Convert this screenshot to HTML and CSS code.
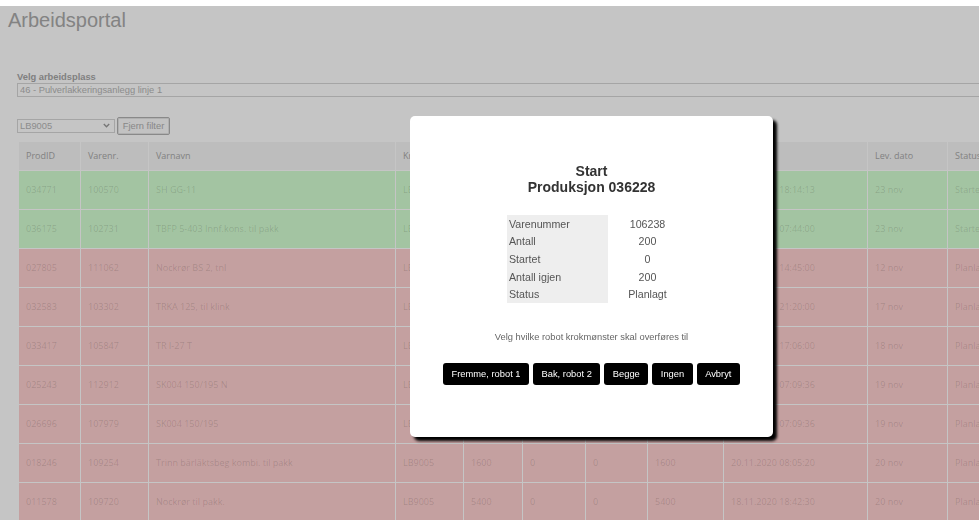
FILE: index.html
```html
<!DOCTYPE html>
<html lang="no">
<head>
<meta charset="utf-8">
<title>Arbeidsportal</title>
<link rel="stylesheet" href="styles.css">
</head>
<body>
  <div class="page">
    <h1 class="title">Arbeidsportal</h1>

    <div class="workspace">
      <label class="field-label" for="workplace">Velg arbeidsplass</label>
      <select id="workplace" class="workplace">
        <option>46 - Pulverlakkeringsanlegg linje 1</option>
      </select>

      <div class="filter">
        <div class="filter-select">
          <select>
            <option>LB9005</option>
          </select>
          <svg class="chevron" width="7" height="5" viewBox="0 0 7 5" aria-hidden="true">
            <path d="M0.8 1 L3.5 3.7 L6.2 1" fill="none" stroke="currentColor" stroke-width="1.4"/>
          </svg>
        </div>
        <button class="filter-clear" type="button">Fjern filter</button>
      </div>

      <table class="orders">
        <colgroup>
          <col style="width:62px"><col style="width:68px"><col style="width:247px"><col style="width:68px">
          <col style="width:59px"><col style="width:63px"><col style="width:62px"><col style="width:76px">
          <col style="width:144px"><col style="width:80px"><col style="width:110px">
        </colgroup>
        <thead>
          <tr>
            <th>ProdID</th><th>Varenr.</th><th>Varnavn</th><th>Krok</th><th>Antall</th><th>Startet</th>
            <th>Ferdig</th><th>Igjen</th><th>Start</th><th>Lev. dato</th><th>Status</th>
          </tr>
        </thead>
        <tbody>
          <tr class="started">
            <td>034771</td><td>100570</td><td>SH GG-11</td><td>LB9005</td><td>1200</td><td>400</td>
            <td>380</td><td>800</td><td>20.11.2020 18:14:13</td><td>23 nov</td><td>Startet</td>
          </tr>
          <tr class="started">
            <td>036175</td><td>102731</td><td>TBFP 5-403 Innf.kons. til pakk</td><td>LB9005</td><td>2400</td><td>1200</td>
            <td>1150</td><td>1200</td><td>21.11.2020 07:44:00</td><td>23 nov</td><td>Startet</td>
          </tr>
          <tr class="planned">
            <td>027805</td><td>111062</td><td>Nockrør BS 2, tnl</td><td>LB9005</td><td>800</td><td>0</td>
            <td>0</td><td>800</td><td>10.11.2020 14:45:00</td><td>12 nov</td><td>Planlagt</td>
          </tr>
          <tr class="planned">
            <td>032583</td><td>103302</td><td>TRKA 125, til klink</td><td>LB9005</td><td>600</td><td>0</td>
            <td>0</td><td>600</td><td>15.11.2020 21:20:00</td><td>17 nov</td><td>Planlagt</td>
          </tr>
          <tr class="planned">
            <td>033417</td><td>105847</td><td>TR I-27 T</td><td>LB9005</td><td>1000</td><td>0</td>
            <td>0</td><td>1000</td><td>16.11.2020 17:06:00</td><td>18 nov</td><td>Planlagt</td>
          </tr>
          <tr class="planned">
            <td>025243</td><td>112912</td><td>SK004 150/195 N</td><td>LB9005</td><td>300</td><td>0</td>
            <td>0</td><td>300</td><td>17.11.2020 07:09:36</td><td>19 nov</td><td>Planlagt</td>
          </tr>
          <tr class="planned">
            <td>026696</td><td>107979</td><td>SK004 150/195</td><td>LB9005</td><td>300</td><td>0</td>
            <td>0</td><td>300</td><td>17.11.2020 07:09:36</td><td>19 nov</td><td>Planlagt</td>
          </tr>
          <tr class="planned">
            <td>018246</td><td>109254</td><td>Trinn bärläktsbeg kombi. til pakk</td><td>LB9005</td><td>1600</td><td>0</td>
            <td>0</td><td>1600</td><td>20.11.2020 08:05:20</td><td>20 nov</td><td>Planlagt</td>
          </tr>
          <tr class="planned">
            <td>011578</td><td>109720</td><td>Nockrør til pakk.</td><td>LB9005</td><td>5400</td><td>0</td>
            <td>0</td><td>5400</td><td>18.11.2020 18:42:30</td><td>20 nov</td><td>Planlagt</td>
          </tr>
        </tbody>
      </table>
    </div>
  </div>

  <div class="backdrop"></div>

  <div class="modal" role="dialog" aria-modal="true">
    <h2 class="modal-title">Start<br>Produksjon 036228</h2>
    <table class="details">
      <tr><th>Varenummer</th><td>106238</td></tr>
      <tr><th>Antall</th><td>200</td></tr>
      <tr><th>Startet</th><td>0</td></tr>
      <tr><th>Antall igjen</th><td>200</td></tr>
      <tr><th>Status</th><td>Planlagt</td></tr>
    </table>
    <p class="prompt">Velg hvilke robot krokmønster skal overføres til</p>
    <div class="actions">
      <button type="button">Fremme, robot 1</button>
      <button type="button">Bak, robot 2</button>
      <button type="button">Begge</button>
      <button type="button">Ingen</button>
      <button type="button">Avbryt</button>
    </div>
  </div>
</body>
</html>
```

FILE: styles.css
```css
html,
body {
  margin: 0;
  height: 100%;
  overflow: hidden;
}

body {
  background: #fff;
  font-family: "Liberation Sans", Arial, sans-serif;
}

.page {
  padding: 9px 8px 8px;
  width: 1060px;
}

.title {
  margin: 0;
  font-size: 20px;
  line-height: 23px;
  font-weight: normal;
  color: #aaa;
}

.workspace {
  margin-top: 40px;
  padding-left: 9px;
}

.field-label {
  display: block;
  font-size: 9.33px;
  line-height: 11px;
  font-weight: bold;
  color: #a6a6a6;
}

.workplace,
.filter-select select {
  appearance: none;
  -webkit-appearance: none;
  display: block;
  box-sizing: border-box;
  height: 14px;
  margin: 0;
  padding: 0 2px;
  border: 1px solid #d6d6d6;
  border-radius: 0;
  background: #fff;
  font-family: "Liberation Sans", Arial, sans-serif;
  font-size: 9.33px;
  line-height: 12px;
  color: #b6b6b6;
}

.workplace {
  width: 100%;
}

.filter {
  display: flex;
  align-items: center;
  gap: 2px;
  margin-top: 20px;
}

.filter-select {
  position: relative;
  width: 98px;
}

.filter-select select {
  width: 100%;
}

.chevron {
  position: absolute;
  right: 5px;
  top: 4px;
  color: #9a9a9a;
}

.filter-clear {
  box-sizing: border-box;
  width: 53px;
  height: 18px;
  padding: 0;
  border: 1px solid #b2b2b2;
  border-radius: 2px;
  box-shadow: inset 0 0 0 1px #e4e4e4;
  background: #fbfbfb;
  font-family: "Liberation Sans", Arial, sans-serif;
  font-size: 9.33px;
  color: #b0b0b0;
}

/* order list */
.orders {
  margin: 7px 0 0 1px;
  border-collapse: collapse;
  table-layout: fixed;
  width: 1039px;
  font-family: "Open Sans", sans-serif;
  font-size: 9px;
}

.orders th,
.orders td {
  padding: 0 7px;
  text-align: left;
  white-space: nowrap;
  overflow: hidden;
}

.orders thead tr {
  height: 28px;
}

.orders th {
  background: #f5f5f5;
  border-left: 1px solid #fff;
  font-weight: normal;
  color: #a8a8a8;
}

.orders tbody tr {
  height: 39px;
}

.orders td {
  border: 1px solid rgba(255, 255, 255, 0.2);
  color: rgba(0, 0, 0, 0.15);
}

.orders .started {
  background: #d4fed2;
}

.orders .planned {
  background: #fecfcf;
}

/* dialog */
.backdrop {
  position: fixed;
  top: 6px;
  left: 0;
  right: 0;
  bottom: 0;
  background: rgba(0, 0, 0, 0.227);
}

.modal {
  position: fixed;
  left: 410px;
  top: 116px;
  box-sizing: border-box;
  width: 363px;
  height: 321px;
  padding-top: 47px;
  background: #fff;
  border-radius: 5px;
  box-shadow: 4px 4px 3px #000;
  text-align: center;
}

.modal-title {
  margin: 0;
  font-size: 14px;
  line-height: 16px;
  font-weight: bold;
  color: #333;
}

.details {
  margin: 20px 0 0 97px;
  border-collapse: collapse;
  font-size: 10.67px;
  color: #555;
}

.details tr {
  height: 17.6px;
}

.details th {
  width: 99px;
  padding: 0 0 0 2px;
  background: #eee;
  text-align: left;
  font-weight: normal;
}

.details td {
  width: 79px;
  padding: 0;
  text-align: center;
}

.prompt {
  margin: 28px 0 0;
  font-size: 9.33px;
  line-height: 12px;
  color: #666;
}

.actions {
  display: flex;
  justify-content: center;
  gap: 4px;
  margin-top: 20px;
}

.actions button {
  height: 22px;
  padding: 0 8.5px;
  border: 0;
  border-radius: 3px;
  background: #000;
  color: #fff;
  font-family: "Liberation Sans", Arial, sans-serif;
  font-size: 9.33px;
}
```
